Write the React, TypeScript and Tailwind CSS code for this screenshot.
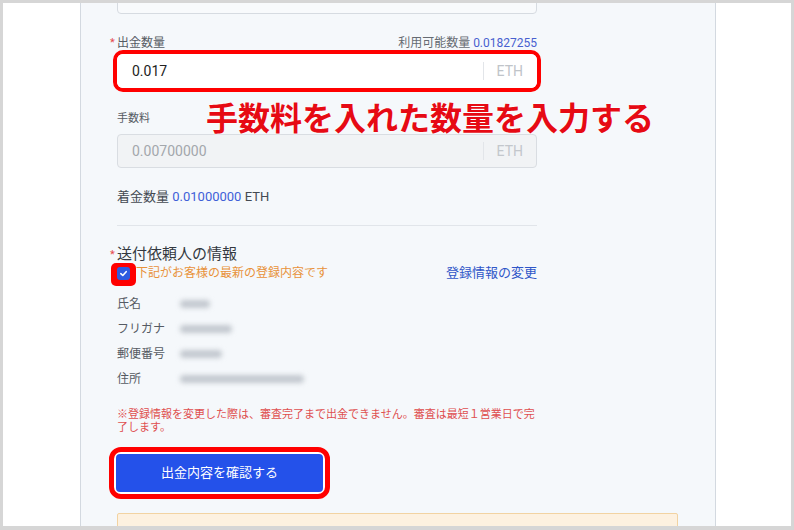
import React from "react";

const Star = () => (
  <span className="inline-block w-[7px] text-[11px] text-[#e5484d]">*</span>
);

const Blur = ({ w }: { w: number }) => (
  <div className="h-[8px] rounded-[4px] bg-[#c3c8cf] blur-[2.5px]" style={{ width: w }} />
);

export default function App() {
  return (
    <div
      className="w-[794px] h-[530px] overflow-hidden bg-[#d6d6d6] pt-[3px] pl-[3px] pr-[3px] pb-[4px]"
      style={{ fontFamily: 'Roboto, "Noto Sans CJK JP", sans-serif' }}
    >
      <div className="flex h-full bg-white">
        <div className="w-[77px] shrink-0" />
        <div className="relative w-[636px] shrink-0 overflow-hidden border-x border-[#d3d9e0] bg-[#f5f8fb] pl-[36px]">
          <div className="w-[420px]">
            {/* previous input (cut off) */}
            <div className="mt-[-25px] h-[36px] rounded-[4px] border border-[#d6dbe1] bg-[#f8fafc]" />

            {/* 出金数量 */}
            <div className="mt-[22px] flex h-[14px] items-center justify-between text-[12px] leading-[14px]">
              <div className="-ml-[7px] flex items-center text-[#555b63]">
                <Star />
                <span>出金数量</span>
              </div>
              <div className="text-[#666b72]">
                利用可能数量 <span className="text-[#4860d0]">0.01827255</span>
              </div>
            </div>
            <div className="-mx-[4px] mt-0 rounded-[10px] border-[4px] border-[#ff0000]">
              <div className="flex h-[34px] items-center rounded-[6px] bg-white pl-[15px] pr-[14px]">
                <span className="flex-1 text-[14px] text-[#222]">0.017</span>
                <span className="h-[18px] w-px bg-[#e2e5e9]" />
                <span className="ml-[13px] text-[14px] text-[#c0c4c9]">ETH</span>
              </div>
            </div>

            {/* 手数料 */}
            <div className="mt-[20px] h-[14px] text-[11px] leading-[14px] text-[#555b63]">手数料</div>
            <div className="mt-[8px] flex h-[34px] items-center rounded-[4px] border border-[#d9dde2] bg-[#f1f3f5] pl-[14px] pr-[13px]">
              <span className="flex-1 text-[14px] text-[#a3a7ac]">0.00700000</span>
              <span className="h-[18px] w-px bg-[#e2e5e9]" />
              <span className="ml-[13px] text-[14px] text-[#c3c7cc]">ETH</span>
            </div>

            {/* 着金数量 */}
            <div className="mt-[21px] h-[16px] text-[13px] leading-[16px] text-[#444a52]">
              着金数量 <span className="text-[#4060d8]">0.01000000</span> ETH
            </div>

            <div className="mt-[20px] border-t border-[#e1e5ea]" />

            {/* 送付依頼人の情報 */}
            <div className="-ml-[7px] mt-[20px] flex h-[17px] items-center text-[15px] leading-[17px] text-[#333840]">
              <Star />
              <span>送付依頼人の情報</span>
            </div>
            <div className="flex h-[20px] items-center justify-between">
              <div className="flex items-center">
                <div className="relative h-[13px] w-[13px]">
                  <div className="absolute -left-[6px] -right-[6px] -top-[4px] -bottom-[6px] rounded-[5px] bg-[#ff0000]" />
                  <div className="relative flex h-[13px] w-[13px] items-center justify-center rounded-[3px] bg-[#2f5be0]">
                    <svg width="9" height="9" viewBox="0 0 10 10">
                      <path d="M2 5.2 L4.2 7.2 L8 3" fill="none" stroke="white" strokeWidth="1.8" strokeLinecap="round" strokeLinejoin="round" />
                    </svg>
                  </div>
                </div>
                <span className="ml-[6px] text-[12px] text-[#e8923a]">下記がお客様の最新の登録内容です</span>
              </div>
              <span className="text-[13px] text-[#2f56c8]">登録情報の変更</span>
            </div>

            {/* rows */}
            <div className="mt-[8px] text-[12px] text-[#555b63]">
              <div className="flex h-[25px] items-center">
                <span className="w-[63px]">氏名</span>
                <Blur w={30} />
              </div>
              <div className="flex h-[25px] items-center">
                <span className="w-[63px]">フリガナ</span>
                <Blur w={52} />
              </div>
              <div className="flex h-[25px] items-center">
                <span className="w-[63px]">郵便番号</span>
                <Blur w={42} />
              </div>
              <div className="flex h-[25px] items-center">
                <span className="w-[63px]">住所</span>
                <Blur w={124} />
              </div>
            </div>

            <p className="mt-[17px] text-[11px] leading-[13px] text-[#df4f4f]">
              ※登録情報を変更した際は、審査完了まで出金できません。審査は最短１営業日で完了します。
            </p>

            <div className="-ml-[8px] mt-[13px] inline-block rounded-[12px] border-[5px] border-[#ff0000] bg-white px-[2px] py-[2px]">
              <div className="flex h-[38px] w-[207px] items-center justify-center rounded-[4px] bg-[#2451ea] text-[13px] text-white">
                出金内容を確認する
              </div>
            </div>

            <div className="mt-[14px] h-[40px] w-[561px] rounded-[2px] border border-[#f2d3a2] bg-[#fdf1e0]" />
          </div>

          {/* annotation overlay */}
          <div
            className="absolute left-[125px] top-[96px] whitespace-nowrap text-[32px] font-bold leading-[34px] text-[#e60a14] [text-shadow:0_0_2px_#ffffff,0_0_2px_#ffffff]"
            style={{ fontFamily: '"Noto Sans CJK JP", sans-serif' }}
          >
            手数料を入れた数量を入力する
          </div>
        </div>
        <div className="flex-1" />
      </div>
    </div>
  );
}
